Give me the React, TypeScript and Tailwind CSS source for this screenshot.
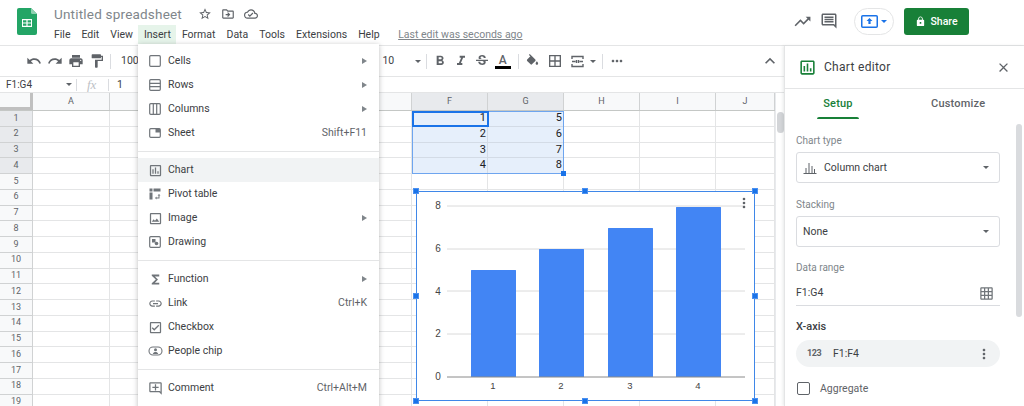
import React from "react";
import {
  MdUndo,
  MdRedo,
  MdPrint,
  MdFormatPaint,
  MdFormatBold,
  MdFormatItalic,
  MdStrikethroughS,
  MdBorderAll,
  MdMoreHoriz,
  MdKeyboardArrowUp,
  MdClose,
  MdStarBorder,
  MdOutlineDriveFileMove,
  MdOutlineCloudDone,
  MdTrendingUp,
  MdOutlineInsertComment,
  MdLock,
  MdFunctions,
  MdLink,
  MdOutlineCheckBox,
  MdOutlineAddComment,
  MdOutlineInsertChart,
  MdMoreVert,
  MdOutlineImage,
  MdOutlineGridOn,
} from "react-icons/md";

const SheetsLogo = () => (
  <svg width="20" height="27" viewBox="0 0 20 27">
    <path d="M2 0h12l6 6v19a2 2 0 0 1-2 2H2a2 2 0 0 1-2-2V2a2 2 0 0 1 2-2z" fill="#23a566" />
    <path d="M14 0l6 6h-4.500a1.500 1.500 0 0 1-1.500-1.500z" fill="#8ed1b1" />
    <path d="M5 11h10v8H5z" fill="#fff" />
    <path d="M6 12.200h3.400v2.200H6zM10.600 12.200H14v2.200h-3.400zM6 15.600h3.400v2.200H6zM10.600 15.600H14v2.200h-3.400z" fill="#23a566" />
  </svg>
);

// Small outline glyphs Material doesn't ship the same way
const CellsIcon = () => (
  <svg width="14" height="14" viewBox="0 0 14 14" fill="none" stroke="#70757a" strokeWidth="1.200">
    <rect x="1.700" y="1.700" width="10.600" height="10.600" rx="1" />
  </svg>
);
const RowsIcon = () => (
  <svg width="14" height="14" viewBox="0 0 14 14" fill="none" stroke="#70757a" strokeWidth="1.200">
    <rect x="1.700" y="1.700" width="10.600" height="10.600" rx="1" />
    <path d="M1.700 5.300h10.600M1.700 8.700h10.600" />
  </svg>
);
const ColumnsIcon = () => (
  <svg width="14" height="14" viewBox="0 0 14 14" fill="none" stroke="#70757a" strokeWidth="1.200">
    <rect x="1.700" y="1.700" width="10.600" height="10.600" rx="1" />
    <path d="M5.300 1.700v10.600M8.700 1.700v10.600" />
  </svg>
);
const SheetIcon = () => (
  <svg width="14" height="14" viewBox="0 0 14 14" fill="none" stroke="#70757a" strokeWidth="1.200">
    <rect x="1.700" y="2.700" width="10.600" height="8.600" rx="1" />
    <path d="M7.500 3h4.500v3.500H7.500z" fill="#70757a" stroke="none" />
  </svg>
);
const PivotIcon = () => (
  <svg width="14" height="14" viewBox="0 0 14 14" fill="#70757a">
    <path d="M1.500 1.500h3v3h-3zM5.500 1.500h7v3h-7zM1.500 5.500h3v7h-3z" />
    <path d="M7 11l1.500-1.500v1h2v-2h-1L11 7l1.500 1.500h-1v3h-3v1z" />
  </svg>
);
const DrawingIcon = () => (
  <svg width="14" height="14" viewBox="0 0 14 14" fill="none" stroke="#70757a" strokeWidth="1.200">
    <rect x="1.700" y="1.700" width="10.600" height="10.600" rx="1" />
    <path d="M4 4h3.500v3.500H4z" fill="#70757a" stroke="none" />
    <circle cx="8.500" cy="8.500" r="1.800" fill="#70757a" stroke="none" />
  </svg>
);
const PeopleChipIcon = () => (
  <svg width="15" height="14" viewBox="0 0 15 14" fill="none" stroke="#70757a" strokeWidth="1.100">
    <rect x="1" y="3" width="13" height="8" rx="4" />
    <circle cx="7.500" cy="5.800" r="1.500" fill="#70757a" stroke="none" />
    <path d="M4.800 10c.5-1.600 1.500-2 2.700-2s2.200.4 2.700 2z" fill="#70757a" stroke="none" />
  </svg>
);
const MergeIcon = () => (
  <svg width="15" height="15" viewBox="0 0 15 15" fill="none" stroke="#5f6368" strokeWidth="1.400">
    <path d="M2 5V2.500h11V5M2 10v2.500h11V10" />
    <path d="M2 7.500h3.500M9.500 7.500H13M6.500 6v3M8.500 6v3" />
  </svg>
);
const FillIcon = () => (
  <svg width="15" height="15" viewBox="0 0 24 24" fill="#5f6368">
    <path d="M16.560 8.940L7.620 0 6.210 1.410l2.380 2.380-5.150 5.150c-.59.59-.59 1.540 0 2.120l5.500 5.500c.29.29.68.44 1.060.44s.77-.15 1.060-.44l5.500-5.500c.59-.58.59-1.530 0-2.120z" />
    <path d="M19 11.500s-2 2.170-2 3.500c0 1.100.9 2 2 2s2-.9 2-2c0-1.330-2-3.500-2-3.500z" />
  </svg>
);
const PresentIcon = () => (
  <svg width="17" height="13" viewBox="0 0 17 13">
    <rect x="0.750" y="0.750" width="15.500" height="11.500" rx="1" fill="none" stroke="#1a73e8" strokeWidth="1.500" />
    <path d="M8.500 3l3 3H9.600v3H7.400V6H5.500z" fill="#1a73e8" />
  </svg>
);
const ColumnChartGlyph = () => (
  <svg width="14" height="14" viewBox="0 0 14 14" fill="none" stroke="#5f6368" strokeWidth="1">
    <path d="M0.500 12.500h13M3 12V7M6 12V2M9 12V5M11.500 12V8" />
  </svg>
);
const SideCaret = () => <span className="w-0 h-0 border-y-[3px] border-y-transparent border-l-[5px] border-l-[#80868b]" />;
const DownCaret = ({ color = "#5f6368" }: { color?: string }) => (
  <span className="block w-0 h-0 border-x-[3.500px] border-x-transparent border-t-[3.500px]" style={{ borderTopColor: color }} />
);

type MenuEntry = { label: string; icon: React.ReactNode; sub?: boolean; keys?: string; active?: boolean };

const mi = "text-[15px] text-[#70757a]";
const menuGroups: MenuEntry[][] = [
  [
    { label: "Cells", icon: <CellsIcon />, sub: true },
    { label: "Rows", icon: <RowsIcon />, sub: true },
    { label: "Columns", icon: <ColumnsIcon />, sub: true },
    { label: "Sheet", icon: <SheetIcon />, keys: "Shift+F11" },
  ],
  [
    { label: "Chart", icon: <MdOutlineInsertChart className={mi} />, active: true },
    { label: "Pivot table", icon: <PivotIcon /> },
    { label: "Image", icon: <MdOutlineImage className={mi} />, sub: true },
    { label: "Drawing", icon: <DrawingIcon /> },
  ],
  [
    { label: "Function", icon: <MdFunctions className={mi} />, sub: true },
    { label: "Link", icon: <MdLink className={mi} />, keys: "Ctrl+K" },
    { label: "Checkbox", icon: <MdOutlineCheckBox className={mi} /> },
    { label: "People chip", icon: <PeopleChipIcon /> },
  ],
  [{ label: "Comment", icon: <MdOutlineAddComment className={mi} />, keys: "Ctrl+Alt+M" }],
];

const columns = [
  { name: "A", w: "w-[77px]" },
  { name: "B", w: "w-[76px]" },
  { name: "C", w: "w-[76px]" },
  { name: "D", w: "w-[75px]" },
  { name: "E", w: "w-[75px]" },
  { name: "F", w: "w-[76px]" },
  { name: "G", w: "w-[76px]" },
  { name: "H", w: "w-[76px]" },
  { name: "I", w: "w-[76px]" },
  { name: "J", w: "w-[59px]" },
];
const cellValues: Record<string, number[]> = { F: [1, 2, 3, 4], G: [5, 6, 7, 8] };
const rows = Array.from({ length: 19 }, (_, i) => i);

const Handle = ({ className }: { className: string }) => (
  <span className={`absolute w-[6px] h-[6px] bg-[#1a73e8] border border-[#4a90f0] ${className}`} />
);

const tool = "flex items-center justify-center text-[16px] text-[#5f6368]";

const Chart = () => (
  <div className="absolute left-[416px] top-[98px] w-[339px] h-[210px] bg-white border-[1.500px] border-[#3f87e8]">
    <svg width="339" height="210" viewBox="0 0 339 210" className="absolute left-[-1px] top-[-1px]">
      {[15, 58, 100, 143].map((y) => (
        <line key={y} x1="31" x2="329" y1={y} y2={y} stroke="#dadada" strokeWidth="1" />
      ))}
      {[
        [55, 79],
        [123, 58],
        [192, 37],
        [260, 16],
      ].map(([x, y]) => (
        <rect key={x} x={x} y={y} width="45" height={186 - y} fill="#4285f4" rx="0.500" />
      ))}
      <line x1="31" x2="329" y1="186" y2="186" stroke="#8a8a8a" strokeWidth="1" />
      {[
        ["8", 18],
        ["6", 61],
        ["4", 104],
        ["2", 146],
        ["0", 189],
      ].map(([t, y]) => (
        <text key={t} x="22" y={y} textAnchor="middle" fontSize="10" fill="#444" fontFamily="Arial, 'Liberation Sans', sans-serif">
          {t}
        </text>
      ))}
      {[
        ["1", 77],
        ["2", 145],
        ["3", 214],
        ["4", 282],
      ].map(([t, x]) => (
        <text key={t} x={x} y="198" textAnchor="middle" fontSize="9.500" fill="#444" fontFamily="Arial, 'Liberation Sans', sans-serif">
          {t}
        </text>
      ))}
      <circle cx="328" cy="8" r="1.300" fill="#5f6368" />
      <circle cx="328" cy="12" r="1.300" fill="#5f6368" />
      <circle cx="328" cy="16" r="1.300" fill="#5f6368" />
    </svg>
    <Handle className="left-[-4px] top-[-4px]" />
    <Handle className="left-[165px] top-[-4px]" />
    <Handle className="right-[-4px] top-[-4px]" />
    <Handle className="left-[-4px] top-[101px]" />
    <Handle className="right-[-4px] top-[101px]" />
    <Handle className="left-[-4px] bottom-[-4px]" />
    <Handle className="left-[165px] bottom-[-4px]" />
    <Handle className="right-[-4px] bottom-[-4px]" />
  </div>
);

const Grid = () => (
  <div className="relative flex-1 overflow-hidden">
    <div className="flex h-[18px] bg-[#f8f9fa] border-b border-[#c4c7c5] text-[9px] text-[#5f6368]">
      <div className="w-[33px] shrink-0 border-r-[3px] border-[#c0c0c0] border-b-[3px]" />
      {columns.map((c) => (
        <div
          key={c.name}
          className={`${c.w} shrink-0 flex items-center justify-center border-r border-[#d0d2d3] ${cellValues[c.name] ? "bg-[#e8eaed]" : ""}`}
        >
          {c.name}
        </div>
      ))}
    </div>
    {rows.map((r) => (
      <div key={r} className="flex h-[15.750px] text-[11px] text-[#202124]">
        <div
          className={`w-[33px] shrink-0 flex items-center justify-center text-[9px] text-[#5f6368] border-r border-b border-[#d0d2d3] ${
            r < 4 ? "bg-[#e8eaed]" : "bg-[#f8f9fa]"
          }`}
        >
          {r + 1}
        </div>
        {columns.map((c) => {
          const v = cellValues[c.name]?.[r];
          return (
            <div
              key={c.name}
              className={`${c.w} shrink-0 flex items-center justify-end pr-[1px] border-r border-b ${
                v !== undefined ? "bg-[#e6effb] border-[#d3dbe6]" : "border-[#e4e5e6]"
              }`}
            >
              {v}
            </div>
          );
        })}
      </div>
    ))}
    {/* selection outline and active cell */}
    <div className="absolute left-[412px] top-[18px] w-[152px] h-[63px] border-[1.500px] border-[#6ea5ef]" />
    <div className="absolute left-[412px] top-[18px] w-[77px] h-[16px] border-2 border-[#1a73e8]" />
    <span className="absolute left-[561px] top-[78px] w-[5px] h-[5px] bg-[#1a73e8]" />
    <Chart />
    {/* sheet scrollbar */}
    <div className="absolute left-[775px] top-0 bottom-0 w-[9px] bg-white border-l border-[#e8eaed]">
      <div className="absolute left-[1px] top-[19px] w-[7px] h-[21px] rounded-full bg-[#d3d5d8]" />
    </div>
  </div>
);

const InsertMenu = () => (
  <div className="absolute left-[138px] top-[44px] w-[241px] h-[380px] bg-white shadow-[0_1px_5px_rgba(60,64,67,0.35)] pt-[5px] text-[10.500px] text-[#3c4043]">
    {menuGroups.map((group, gi) => (
      <div key={gi} className={gi > 0 ? "border-t border-[#e4e5e6] mt-[6px] pt-[6px]" : ""}>
        {group.map((m) => (
          <div key={m.label} className={`flex items-center h-6 pl-[7px] pr-[12px] ${m.active ? "bg-[#f1f3f4]" : ""}`}>
            <span className="w-5 mr-[3px] flex items-center justify-center">{m.icon}</span>
            <span className="flex-1">{m.label}</span>
            {m.sub && <SideCaret />}
            {m.keys && <span className="text-[#5f6368]">{m.keys}</span>}
          </div>
        ))}
      </div>
    ))}
  </div>
);

const FieldLabel = ({ children, className = "" }: { children: React.ReactNode; className?: string }) => (
  <div className={`text-[10px] leading-3 text-[#80868b] ${className}`}>{children}</div>
);

const SelectBox = ({ children, className = "" }: { children: React.ReactNode; className?: string }) => (
  <div className={`flex items-center w-[204px] h-[31px] border border-[#dadce0] rounded-[3px] pl-[6px] pr-[10px] text-[10.500px] text-[#3c4043] ${className}`}>
    <div className="flex-1 flex items-center gap-[7px]">{children}</div>
    <DownCaret />
  </div>
);

const ChartEditor = () => (
  <aside className="w-[240px] shrink-0 relative border-l border-[#e4e5e6] shadow-[-1px_0_3px_rgba(60,64,67,0.12)] bg-white overflow-hidden">
    <div className="flex items-center h-[43px] border-b border-[#e4e5e6] pl-[13px] pr-[13px]">
      <MdOutlineInsertChart className="text-[19px] text-[#188038]" />
      <span className="ml-[7px] flex-1 text-[12px] tracking-[0.3px] text-[#3c4043]">Chart editor</span>
      <MdClose className="text-[15px] text-[#5f6368]" />
    </div>
    <div className="flex h-[30px] text-[11px] font-medium tracking-[0.2px] text-[#5f6368]">
      <div className="relative ml-[32px] w-[42px] flex items-center justify-center text-[#188038]">
        Setup
        <span className="absolute left-0 right-0 bottom-0 h-[2px] rounded-t bg-[#188038]" />
      </div>
      <div className="ml-[72px] flex items-center">Customize</div>
    </div>
    <div className="pl-[11px]">
      <FieldLabel className="mt-[16px]">Chart type</FieldLabel>
      <SelectBox className="mt-[5px]">
        <ColumnChartGlyph />
        Column chart
      </SelectBox>
      <FieldLabel className="mt-[16px]">Stacking</FieldLabel>
      <SelectBox className="mt-[5px]">None</SelectBox>
      <FieldLabel className="mt-[15px]">Data range</FieldLabel>
      <div className="flex items-center w-[204px] h-[25px] mt-[7px] border-b border-[#dadce0] text-[10.500px] text-[#3c4043]">
        <span className="flex-1">F1:G4</span>
        <MdOutlineGridOn className="text-[15px] text-[#70757a] mr-[6px]" />
      </div>
      <div className="mt-[15px] text-[11px] leading-3 font-medium text-[#3c4043]">X-axis</div>
      <div className="flex items-center w-[204px] h-[27px] mt-[7px] rounded-full bg-[#f1f3f4] pl-[11px] pr-[8px] text-[10.500px] text-[#3c4043]">
        <span className="text-[9px] font-bold text-[#5f6368] w-[26px] tracking-[-0.4px]">123</span>
        <span className="flex-1">F1:F4</span>
        <MdMoreVert className="text-[16px] text-[#5f6368]" />
      </div>
      <div className="flex items-center mt-[14px] ml-[1px]">
        <span className="w-[13px] h-[13px] border-[1.500px] border-[#5f6368] rounded-[2px]" />
        <span className="ml-[10px] text-[10.500px] text-[#5f6368]">Aggregate</span>
      </div>
    </div>
    <div className="absolute left-[231px] top-[78px] w-[6px] h-[193px] rounded-full bg-[#d9dbde]" />
  </aside>
);

export default function App() {
  return (
    <div className="relative w-[1024px] h-[406px] overflow-hidden bg-white font-['Roboto',sans-serif] flex flex-col">
      <header className="h-[46px] shrink-0 flex border-b border-[#e4e5e6]">
        <div className="ml-[17px] mt-[8px]">
          <SheetsLogo />
        </div>
        <div className="ml-[17px] flex-1 flex flex-col">
          <div className="flex items-center h-[25px] pt-[3px]">
            <span className="text-[13.500px] tracking-[0.2px] text-[#80868b]">Untitled spreadsheet</span>
            <div className="flex items-center gap-[9px] ml-[16px] text-[14px] text-[#5f6368]">
              <MdStarBorder />
              <MdOutlineDriveFileMove />
              <MdOutlineCloudDone />
            </div>
          </div>
          <nav className="flex items-center h-[20px] -ml-[5.500px] text-[10.500px] text-[#3c4043]">
            {["File", "Edit", "View", "Insert", "Format", "Data", "Tools", "Extensions", "Help"].map((m) => (
              <span key={m} className={`h-full flex items-center px-[5.500px] ${m === "Insert" ? "bg-[#e6f4ea]" : ""}`}>
                {m}
              </span>
            ))}
            <span className="ml-[13px] underline text-[#80868b]">Last edit was seconds ago</span>
          </nav>
        </div>
        <div className="flex items-start pt-[8px] pr-[55px]">
          <MdTrendingUp className="text-[19px] text-[#5f6368] mt-[4px]" />
          <MdOutlineInsertComment className="text-[18px] text-[#5f6368] ml-[8px] mt-[4px]" />
          <div className="ml-[16px] w-[40px] h-[27px] rounded-full border border-[#e4e5e6] flex items-center justify-center gap-[3px]">
            <PresentIcon />
            <DownCaret color="#1a73e8" />
          </div>
          <div className="ml-[10px] w-[65px] h-[27px] rounded-[3px] bg-[#188038] flex items-center justify-center gap-[4px] text-white text-[10.500px] font-medium">
            <MdLock className="text-[11px]" />
            Share
          </div>
        </div>
      </header>
      <div className="flex-1 flex min-h-0">
        <div className="w-[784px] shrink-0 flex flex-col">
          <div className="relative h-[31px] shrink-0 flex items-center border-b border-[#e4e5e6]">
            <div className="flex items-center ml-[23px]">
              <span className={`${tool} w-[21px]`}><MdUndo /></span>
              <span className={`${tool} w-[21px]`}><MdRedo /></span>
              <span className={`${tool} w-[21px]`}><MdPrint /></span>
              <span className={`${tool} w-[21px]`}><MdFormatPaint /></span>
            </div>
            <span className="ml-[3px] w-px h-[15px] bg-[#dadce0]" />
            <span className="ml-[10px] text-[10.500px] text-[#3c4043]">100%</span>
            <span className="ml-[236px] text-[10.500px] text-[#3c4043]">10</span>
            <span className="ml-[21px] flex"><DownCaret /></span>
            <span className="ml-[5px] w-px h-[15px] bg-[#dadce0]" />
            <div className="flex items-center ml-[2px]">
              <span className={`${tool} w-[21px]`}><MdFormatBold /></span>
              <span className={`${tool} w-[21px]`}><MdFormatItalic /></span>
              <span className={`${tool} w-[21px]`}><MdStrikethroughS /></span>
              <span className="w-[21px] flex flex-col items-center text-[12px] leading-[12px] font-medium text-[#5f6368]">
                A
                <span className="w-[16px] h-[3px] bg-black" />
              </span>
            </div>
            <span className="ml-[5px] w-px h-[15px] bg-[#dadce0]" />
            <div className="flex items-center ml-[2px]">
              <span className={`${tool} w-[23px]`}><FillIcon /></span>
              <span className={`${tool} w-[22px]`}><MdBorderAll /></span>
              <span className={`${tool} w-[22px]`}><MergeIcon /></span>
              <span className="ml-[2px] flex"><DownCaret /></span>
            </div>
            <span className="ml-[6px] w-px h-[15px] bg-[#dadce0]" />
            <span className={`${tool} ml-[4px] w-[20px]`}><MdMoreHoriz /></span>
            <span className={`${tool} ml-auto mr-[4px] text-[20px]`}><MdKeyboardArrowUp /></span>
          </div>
          <div className="h-[16px] shrink-0 flex items-center border-b border-[#e4e5e6] text-[10px] text-[#3c4043]">
            <span className="ml-[6px] w-[60px]">F1:G4</span>
            <DownCaret />
            <span className="ml-[4px] w-px h-[12px] bg-[#dadce0]" />
            <span className="ml-[10px] w-[21px] font-['Liberation_Serif',serif] italic text-[13px] text-[#bdc1c6]">fx</span>
            <span className="w-px h-[12px] bg-[#dadce0]" />
            <span className="ml-[8px] text-[10.500px]">1</span>
          </div>
          <Grid />
        </div>
        <ChartEditor />
      </div>
      <InsertMenu />
    </div>
  );
}
